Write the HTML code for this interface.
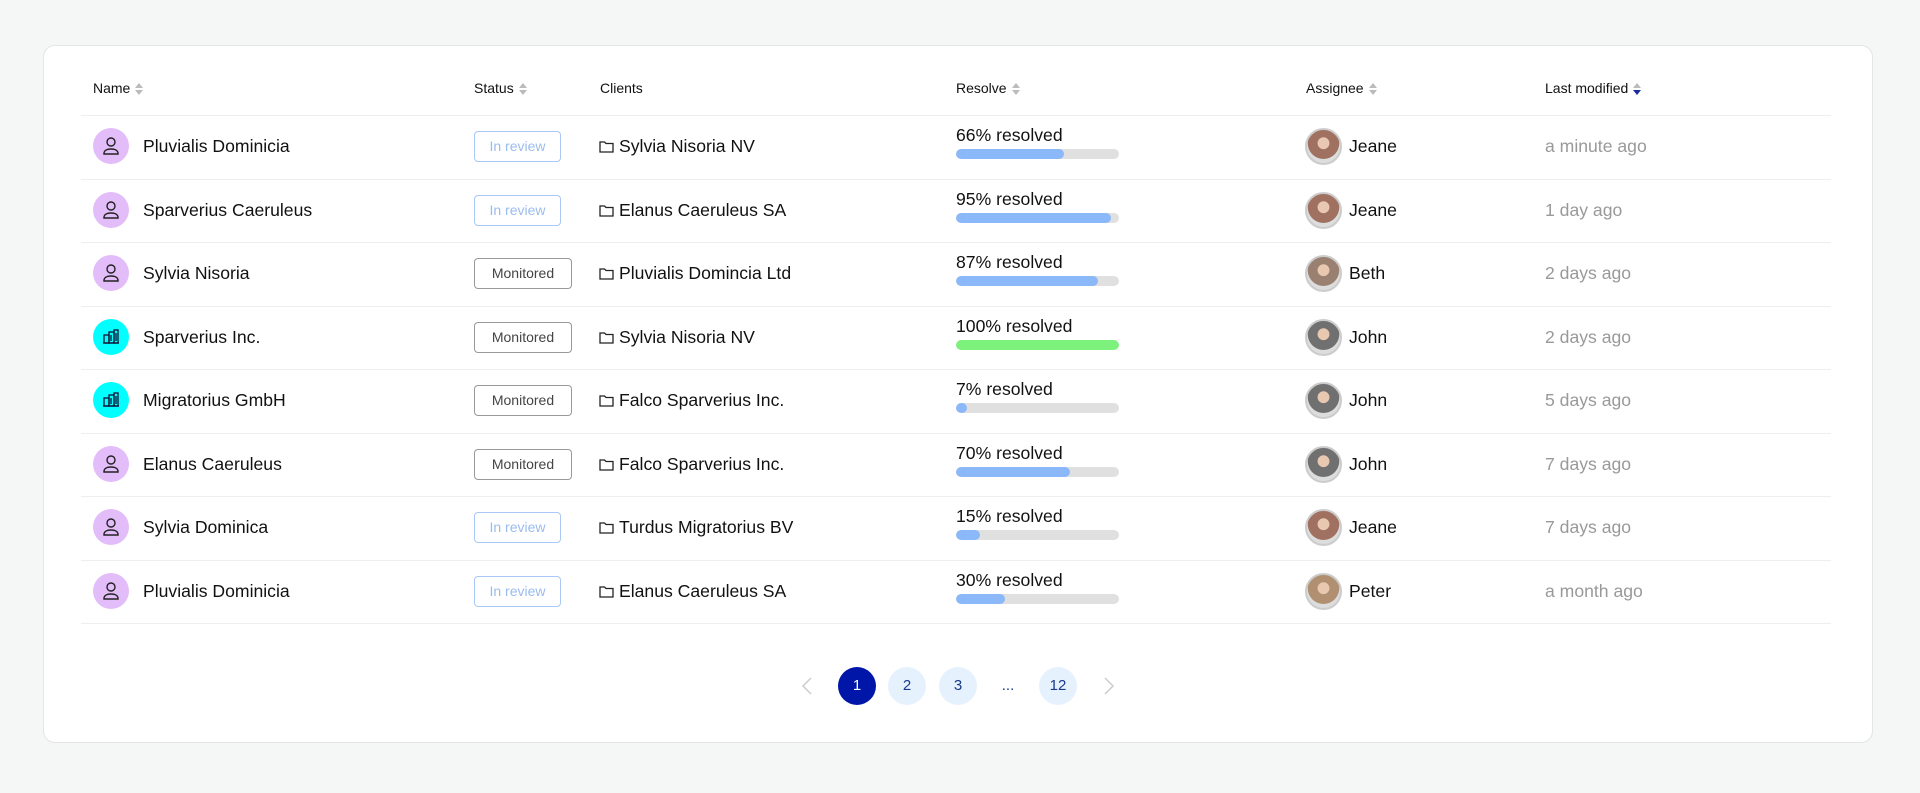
<!DOCTYPE html>
<html><head><meta charset="utf-8"><style>
*{margin:0;padding:0;box-sizing:border-box}
body{width:1920px;height:793px;background:#f5f6f6;font-family:"Liberation Sans",sans-serif;color:#111;position:relative;overflow:hidden}
.card{position:absolute;left:43px;top:45px;width:1830px;height:698px;background:#fff;border:1px solid #e3e5e6;border-radius:12px}
.a{position:absolute}
.h{font-size:14px;color:#111;top:80px}
.sort{display:inline-block;vertical-align:middle;margin-left:5px}
.row{position:absolute;left:0;width:1920px;height:63px}
.sep{position:absolute;left:81px;width:1750px;height:1px;background:#eceeef}
.av{position:absolute;left:93px;width:36px;height:36px;border-radius:50%;top:13px}
.nm{position:absolute;left:143px;top:21px;font-size:17.6px}
.badge{position:absolute;left:474px;top:16px;height:31px;border-radius:4px;font-size:14px;line-height:29px;text-align:center;border:1px solid}
.rev{width:87px;color:#9bbcf0;border-color:#a9c8f5}
.mon{width:98px;color:#444;border-color:#999}
.cl{position:absolute;left:599px;top:21px;font-size:17.6px}
.rt{position:absolute;left:956px;top:10px;font-size:17.6px}
.bar{position:absolute;left:956px;top:34px;width:163px;height:10px;border-radius:5px;background:#e0e0e0;overflow:hidden}
.bar i{display:block;height:100%;background:#8ab8f8;border-radius:5px}
.pa{position:absolute;left:1305px;top:13px;width:37px;height:37px;border-radius:50%;border:2px solid #ccc;overflow:hidden;background:#8b7060}
.pn{position:absolute;left:1349px;top:21px;font-size:17.6px}
.lm{position:absolute;left:1545px;top:21px;font-size:17.6px;color:#999}
.pg{position:absolute;top:667px;width:38px;height:38px;border-radius:50%;background:#e6f1fe;color:#1a3a8a;text-align:center;line-height:38px;font-size:15px}
</style></head><body>
<div class="card"></div>
<div class="a h" style="left:93px">Name<svg class="sort" width="8" height="12"><path d="M4 0L8 5H0Z M4 12L8 7H0Z" fill="#bbb"/></svg></div>
<div class="a h" style="left:474px">Status<svg class="sort" width="8" height="12"><path d="M4 0L8 5H0Z M4 12L8 7H0Z" fill="#bbb"/></svg></div>
<div class="a h" style="left:600px">Clients</div>
<div class="a h" style="left:956px">Resolve<svg class="sort" width="8" height="12"><path d="M4 0L8 5H0Z M4 12L8 7H0Z" fill="#bbb"/></svg></div>
<div class="a h" style="left:1306px">Assignee<svg class="sort" width="8" height="12"><path d="M4 0L8 5H0Z M4 12L8 7H0Z" fill="#bbb"/></svg></div>
<div class="a h" style="left:1545px">Last modified<svg class="sort" width="8" height="12"><path d="M4 0L8 5H0Z" fill="#bbb"/><path d="M4 12L8 7H0Z" fill="#1a2aa0"/></svg></div>
<div class="sep" style="top:115px"></div>

<div id="rows"></div>
<script>
var d=[
["p","Pluvialis Dominicia","r","Sylvia Nisoria NV",66,"j","Jeane","a minute ago"],
["p","Sparverius Caeruleus","r","Elanus Caeruleus SA",95,"j","Jeane","1 day ago"],
["p","Sylvia Nisoria","m","Pluvialis Domincia Ltd",87,"b","Beth","2 days ago"],
["c","Sparverius Inc.","m","Sylvia Nisoria NV",100,"o","John","2 days ago"],
["c","Migratorius GmbH","m","Falco Sparverius Inc.",7,"o","John","5 days ago"],
["p","Elanus Caeruleus","m","Falco Sparverius Inc.",70,"o","John","7 days ago"],
["p","Sylvia Dominica","r","Turdus Migratorius BV",15,"j","Jeane","7 days ago"],
["p","Pluvialis Dominicia","r","Elanus Caeruleus SA",30,"pe","Peter","a month ago"]];
var person='<svg width="36" height="36" viewBox="0 0 36 36"><circle cx="18" cy="14" r="4" fill="none" stroke="#222" stroke-width="1.4"/><path d="M11 25.5c0-3 3-4.5 7-4.5s7 1.5 7 4.5v.5h-14z" fill="none" stroke="#222" stroke-width="1.4"/></svg>';
var bld='<svg width="36" height="36" viewBox="0 0 36 36"><g fill="none" stroke="#113" stroke-width="1.3"><rect x="11" y="16" width="5" height="8"/><rect x="16" y="13" width="5" height="11"/><rect x="21" y="11" width="4" height="13"/><path d="M10 24h16"/><path d="M18 16v6M23 14v8"/></g></svg>';
var folder='<svg width="15" height="13" viewBox="0 0 15 13" style="vertical-align:-1px;margin-right:5px"><path d="M1 2h4.5l1.5 1.5h7v8.5H1z" fill="none" stroke="#222" stroke-width="1.3"/></svg>';
var h='';
d.forEach(function(r,i){
var t=115+i*63.5;
var av=r[0]=="p"?'<div class="av" style="background:#e2bdf9">'+person+'</div>':'<div class="av" style="background:#0ff">'+bld+'</div>';
var bd=r[2]=="r"?'<div class="badge rev">In review</div>':'<div class="badge mon">Monitored</div>';
var col=r[4]==100?'#7cf27c':'#8ab8f8';
var pc={j:'#a07060',b:'#9a8070',o:'#707070',pe:'#b09070'}[r[5]];
h+='<div class="row" style="top:'+t+'px">'+av+'<div class="nm">'+r[1]+'</div>'+bd+'<div class="cl">'+folder+r[3]+'</div><div class="rt">'+r[4]+'% resolved</div><div class="bar"><i style="width:'+r[4]+'%;background:'+col+'"></i></div><div class="pa" style="background:radial-gradient(circle at 50% 40%,#e8c8b0 0 22%,'+pc+' 24% 60%,#ddd 62%)"></div><div class="pn">'+r[6]+'</div><div class="lm">'+r[7]+'</div></div><div class="sep" style="top:'+(t+63.5)+'px"></div>';
});
document.getElementById('rows').innerHTML=h;
</script>

<svg class="a" style="left:801px;top:677px" width="12" height="18"><path d="M10 1L2 9l8 8" fill="none" stroke="#ccc" stroke-width="1.5"/></svg>
<div class="pg" style="left:838px;background:#0016a8;color:#fff">1</div>
<div class="pg" style="left:888px">2</div>
<div class="pg" style="left:939px">3</div>
<div class="pg" style="left:989px;background:none">...</div>
<div class="pg" style="left:1039px">12</div>
<svg class="a" style="left:1103px;top:677px" width="12" height="18"><path d="M2 1l8 8-8 8" fill="none" stroke="#ccc" stroke-width="1.5"/></svg>
</body></html>
